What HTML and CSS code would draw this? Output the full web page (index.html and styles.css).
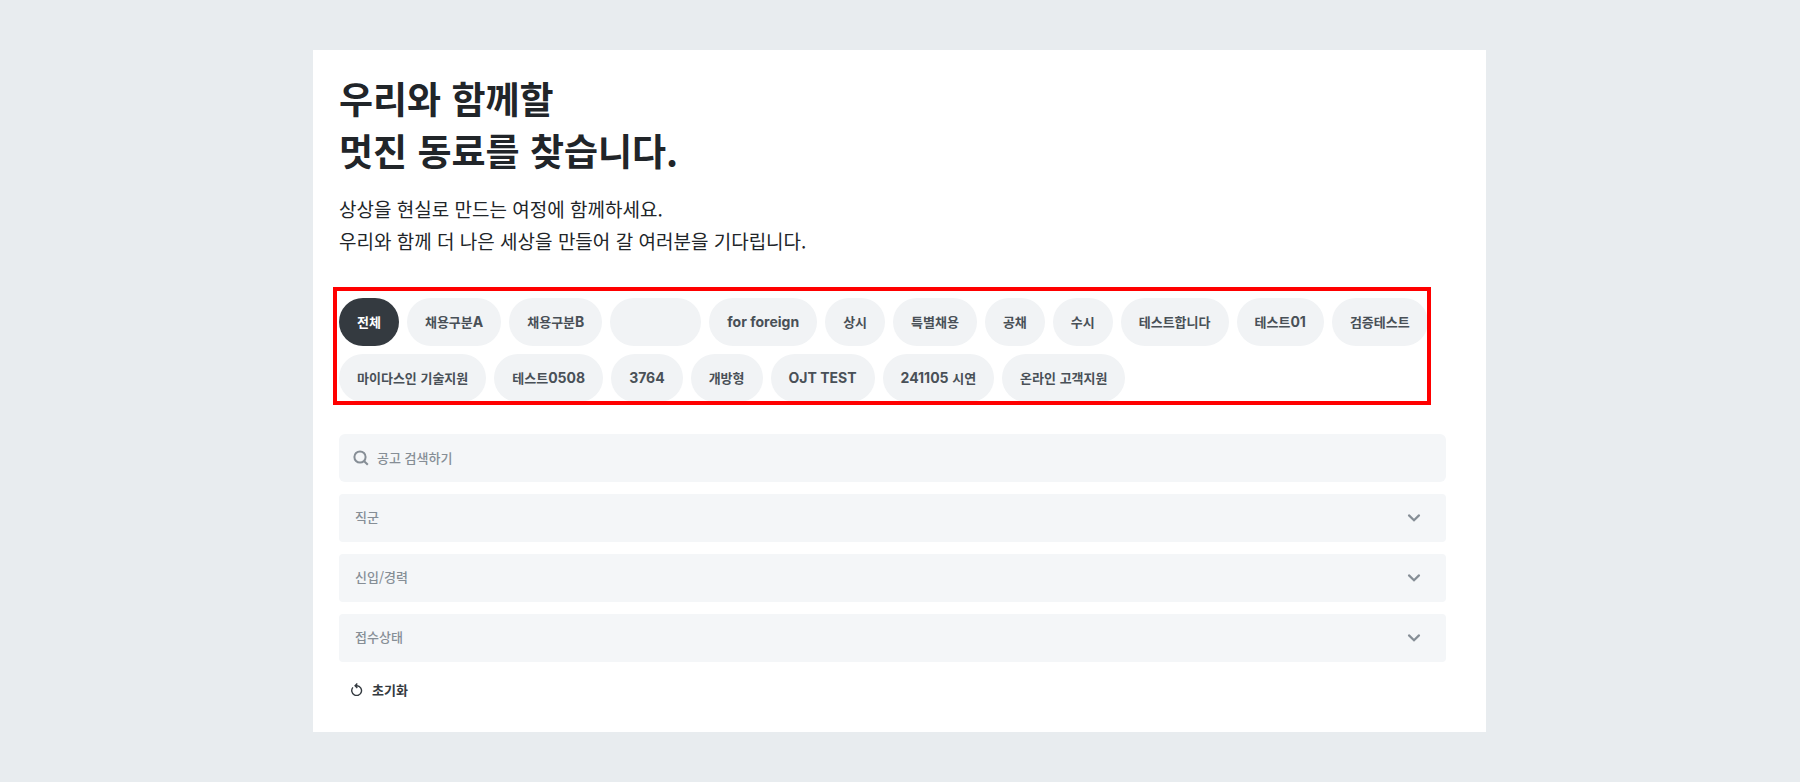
FILE: index.html
```html
<!DOCTYPE html>
<html lang="ko">
<head>
<meta charset="utf-8">
<meta name="viewport" content="width=device-width, initial-scale=1">
<title>채용 공고</title>
<link rel="stylesheet" href="styles.css">
</head>
<body>
<main class="card">
  <h1 class="title">우리와 함께할<br>멋진 동료를 찾습니다.</h1>
  <p class="lead">상상을 현실로 만드는 여정에 함께하세요.<br>우리와 함께 더 나은 세상을 만들어 갈 여러분을 기다립니다.</p>

  <div class="chips">
    <button class="chip chip-active" type="button">전체</button>
    <button class="chip" type="button">채용구분<span class="latin">A</span></button>
    <button class="chip" type="button">채용구분<span class="latin">B</span></button>
    <button class="chip chip-blank" type="button"></button>
    <button class="chip" type="button"><span class="latin">for foreign</span></button>
    <button class="chip" type="button">상시</button>
    <button class="chip" type="button">특별채용</button>
    <button class="chip" type="button">공채</button>
    <button class="chip" type="button">수시</button>
    <button class="chip" type="button">테스트합니다</button>
    <button class="chip" type="button">테스트<span class="latin">01</span></button>
    <button class="chip" type="button">검증테스트</button>
    <button class="chip" type="button">마이다스인 기술지원</button>
    <button class="chip" type="button">테스트<span class="latin">0508</span></button>
    <button class="chip" type="button"><span class="latin">3764</span></button>
    <button class="chip" type="button">개방형</button>
    <button class="chip" type="button"><span class="latin">OJT TEST</span></button>
    <button class="chip" type="button"><span class="latin">241105</span> 시연</button>
    <button class="chip" type="button">온라인 고객지원</button>
  </div>

  <form class="filters">
    <label class="search">
      <svg class="search-icon" viewBox="0 0 16 16" aria-hidden="true"><circle cx="7" cy="7" r="5.6"/><path d="M11.2 11.2 14.8 14.8"/></svg>
      <input class="search-input" type="text" placeholder="공고 검색하기" aria-label="공고 검색하기">
    </label>
    <label class="field">
      <select class="select" aria-label="직군"><option>직군</option></select>
      <svg class="chevron" viewBox="0 0 12 8" aria-hidden="true"><path d="M1 1.4 6 6.2 11 1.4"/></svg>
    </label>
    <label class="field">
      <select class="select" aria-label="신입/경력"><option>신입/경력</option></select>
      <svg class="chevron" viewBox="0 0 12 8" aria-hidden="true"><path d="M1 1.4 6 6.2 11 1.4"/></svg>
    </label>
    <label class="field">
      <select class="select" aria-label="접수상태"><option>접수상태</option></select>
      <svg class="chevron" viewBox="0 0 12 8" aria-hidden="true"><path d="M1 1.4 6 6.2 11 1.4"/></svg>
    </label>
    <button class="reset" type="reset">
      <svg class="reset-icon" viewBox="0 0 12 13" aria-hidden="true"><path d="M1.9 4.4A4.9 4.9 0 1 0 6 2.7H4.2M6.3.5 4.1 2.7 6.3 4.9"/></svg>
      초기화
    </button>
  </form>
</main>
</body>
</html>
```

FILE: styles.css
```css
* { box-sizing: border-box; }

body {
  margin: 0;
  padding: 50px 25px 50px 24px;
  background: #e8ecef;
  color: #212529;
  font-family: "Noto Sans CJK KR", sans-serif;
}

button, input, select { font: inherit; border: 0; margin: 0; }

.card {
  max-width: 1173px;
  margin: 0 auto;
  padding: 22px 40px 26px 26px;
  background: #fff;
}

.title {
  margin: 0;
  font-size: 37px;
  line-height: 52px;
  font-weight: 700;
}

.lead {
  margin: 17px 0 41px;
  font-size: 19px;
  line-height: 32px;
  font-weight: 400;
}

.chips {
  position: relative;
  display: flex;
  flex-wrap: wrap;
  gap: 8px;
  margin-bottom: 32px;
}

/* highlight frame over the category list */
.chips::after {
  content: "";
  position: absolute;
  inset: -11px 15px -3px -6px;
  border: 4px solid #f00;
  pointer-events: none;
}

.chip {
  height: 48px;
  padding: 0 18px 2px;
  border-radius: 24px;
  background: #f1f3f5;
  color: #495057;
  font-size: 13px;
  font-weight: 700;
  white-space: nowrap;
}

.chip-active { background: #343a40; color: #fff; }
.chip-blank { width: 91px; }

.latin {
  font-family: Inter, sans-serif;
  font-size: 14px;
  font-weight: 700;
  line-height: 1;
}

.filters {
  display: flex;
  flex-direction: column;
  gap: 12px;
  font-size: 13px;
  font-weight: 500;
}

.search {
  display: flex;
  align-items: center;
  gap: 8px;
  height: 48px;
  padding: 0 14px;
  border-radius: 6px;
  background: #f4f6f8;
}

.search-icon {
  width: 16px;
  height: 16px;
  fill: none;
  stroke: #868e96;
  stroke-width: 2;
}

.search-input {
  flex: 1;
  min-width: 0;
  padding: 0 0 2px;
  background: none;
  color: #495057;
  outline: 0;
}

.search-input::placeholder { color: #868e96; opacity: 1; }

.field { display: grid; align-items: center; }

.select {
  grid-area: 1 / 1;
  width: 100%;
  height: 48px;
  padding: 0 48px 3px 16px;
  border-radius: 4px;
  appearance: none;
  background: #f4f6f8;
  color: #868e96;
}

.chevron {
  grid-area: 1 / 1;
  justify-self: end;
  width: 12px;
  height: 8px;
  margin-right: 26px;
  overflow: visible;
  fill: none;
  stroke: #868e96;
  stroke-width: 2.2;
  stroke-linecap: round;
  pointer-events: none;
}

.reset {
  display: flex;
  align-items: center;
  align-self: flex-start;
  gap: 9px;
  height: 32px;
  padding: 0 12px 2px;
  background: none;
  color: #343a40;
  font-weight: 700;
}

.reset-icon {
  width: 12px;
  height: 13px;
  fill: none;
  stroke: #343a40;
  stroke-width: 1.4;
}
```
